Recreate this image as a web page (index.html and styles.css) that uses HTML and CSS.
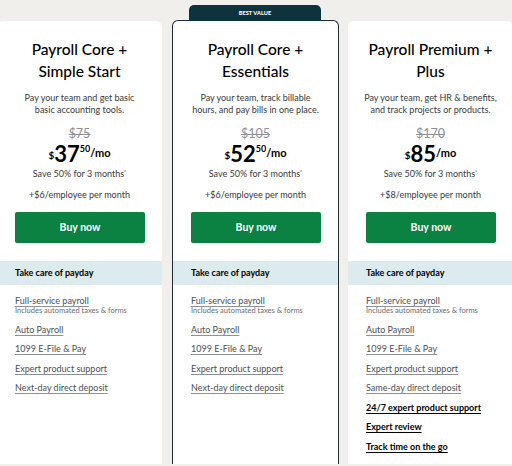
FILE: index.html
```html
<!DOCTYPE html>
<html>
<head>
<meta charset="utf-8">
<link rel="stylesheet" href="styles.css">
</head>
<body>
<div class="plans">
  <div class="card">
    <h2 class="title">Payroll Core +<br>Simple Start</h2>
    <p class="desc">Pay your team and get basic<br>basic accounting tools.</p>
    <div class="old">$75</div>
    <div class="price"><span class="cur">$</span><span class="big">37</span><span class="cents">50</span><span class="per">/mo</span></div>
    <p class="save">Save 50% for 3 months<sup>*</sup></p>
    <p class="emp">+$6/employee per month</p>
    <a class="buy">Buy now</a>
    <div class="sec">Take care of payday</div>
    <ul class="feats">
      <li><a>Full-service payroll</a><span class="note">Includes automated taxes &amp; forms</span></li>
      <li><a>Auto Payroll</a></li>
      <li><a>1099 E-File &amp; Pay</a></li>
      <li><a>Expert product support</a></li>
      <li><a>Next-day direct deposit</a></li>
    </ul>
  </div>
  <div class="card best">
    <div class="badge">BEST VALUE</div>
    <h2 class="title">Payroll Core +<br>Essentials</h2>
    <p class="desc">Pay your team, track billable<br>hours, and pay bills in one place.</p>
    <div class="old">$105</div>
    <div class="price"><span class="cur">$</span><span class="big">52</span><span class="cents">50</span><span class="per">/mo</span></div>
    <p class="save">Save 50% for 3 months<sup>*</sup></p>
    <p class="emp">+$6/employee per month</p>
    <a class="buy">Buy now</a>
    <div class="sec">Take care of payday</div>
    <ul class="feats">
      <li><a>Full-service payroll</a><span class="note">Includes automated taxes &amp; forms</span></li>
      <li><a>Auto Payroll</a></li>
      <li><a>1099 E-File &amp; Pay</a></li>
      <li><a>Expert product support</a></li>
      <li><a>Next-day direct deposit</a></li>
    </ul>
  </div>
  <div class="card">
    <h2 class="title">Payroll Premium +<br>Plus</h2>
    <p class="desc">Pay your team, get HR &amp; benefits,<br>and track projects or products.</p>
    <div class="old">$170</div>
    <div class="price"><span class="cur">$</span><span class="big">85</span><span class="per">/mo</span></div>
    <p class="save">Save 50% for 3 months<sup>*</sup></p>
    <p class="emp">+$8/employee per month</p>
    <a class="buy">Buy now</a>
    <div class="sec">Take care of payday</div>
    <ul class="feats">
      <li><a>Full-service payroll</a><span class="note">Includes automated taxes &amp; forms</span></li>
      <li><a>Auto Payroll</a></li>
      <li><a>1099 E-File &amp; Pay</a></li>
      <li><a>Expert product support</a></li>
      <li><a>Same-day direct deposit</a></li>
      <li class="strong"><a>24/7 expert product support</a></li>
      <li class="strong"><a>Expert review</a></li>
      <li class="strong"><a>Track time on the go</a></li>
    </ul>
  </div>
</div>
</body>
</html>
```
FILE: styles.css
```css
* { box-sizing: border-box; }
html, body { margin: 0; padding: 0; }
body {
  background: #f0efeb;
  font-family: Lato, "Noto Sans", sans-serif;
  color: #393a3d;
  width: 512px;
  height: 466px;
  overflow: hidden;
}
.plans {
  display: flex;
  gap: 10px;
  margin-left: -3px;
  padding-top: 21px;
  align-items: flex-start;
}
.card {
  position: relative;
  width: 165px;
  flex: none;
  height: 443px;
  background: #fff;
  border-radius: 6px 6px 0 0;
  text-align: center;
}
.card + .card + .card { margin-left: -1px; }
.best {
  width: 167px;
  margin-top: -1px;
  height: 444px;
  border: 1.5px solid #1d2b33;
  border-bottom: none;
}
.badge {
  position: absolute;
  top: -16px;
  left: 16px;
  right: 17px;
  height: 16px;
  background: #0d333f;
  color: #fff;
  font-size: 5.5px;
  font-weight: 900;
  line-height: 16px;
  border-radius: 5px 5px 0 0;
  letter-spacing: 0.1px;
}
.title {
  margin: 17px 0 0;
  font-size: 15.5px;
  font-weight: 500;
  line-height: 22px;
  color: #000;
}
.desc {
  margin: 10px 0 0;
  font-size: 9px;
  line-height: 12px;
  color: #393a3d;
}
.old {
  margin-top: 11px;
  font-size: 12.5px;
  line-height: 14px;
  color: #8d9096;
  text-decoration: line-through;
  text-decoration-thickness: 1px;
}
.price {
  display: flex;
  justify-content: center;
  align-items: flex-start;
  color: #000;
  font-weight: 700;
  line-height: 1;
  height: 22px;
  margin-top: 2px;
}
.cur { font-size: 10px; margin-top: 7px; }
.big { font-size: 22px; line-height: 22px; }
.cents { font-size: 9px; margin-top: 1px; }
.per { font-size: 11px; margin-top: 4px; }
.save {
  margin: 2px 0 0;
  font-size: 9px;
  line-height: 11px;
}
.save sup { font-size: 5px; vertical-align: 3px; }
.emp {
  margin: 10px 0 0;
  font-size: 9px;
  line-height: 11px;
}
.buy {
  display: block;
  margin: 12px 17px 0 18px;
  height: 31px;
  line-height: 31px;
  background: #0b8242;
  color: #fff;
  font-size: 10.5px;
  font-weight: 700;
  border-radius: 2px;
}
.sec {
  margin-top: 18px;
  height: 24px;
  line-height: 24px;
  background: #dcebee;
  text-align: left;
  padding-left: 18px;
  font-size: 9px;
  font-weight: 700;
  color: #000;
}
.feats {
  list-style: none;
  margin: 0;
  padding: 10px 0 0 18px;
  text-align: left;
}
.feats li {
  font-size: 9px;
  line-height: 11px;
  margin-bottom: 8.5px;
}
.feats a {
  color: #4d4f53;
  text-decoration: underline;
  text-decoration-color: #8d9096;
  text-underline-offset: 1.5px;
  display: inline-block;
}
.note {
  display: block;
  font-size: 7.5px;
  line-height: 9px;
  color: #6b6c72;
}
.feats .strong a {
  color: #000;
  font-weight: 700;
  text-decoration-color: #000;
}
```
